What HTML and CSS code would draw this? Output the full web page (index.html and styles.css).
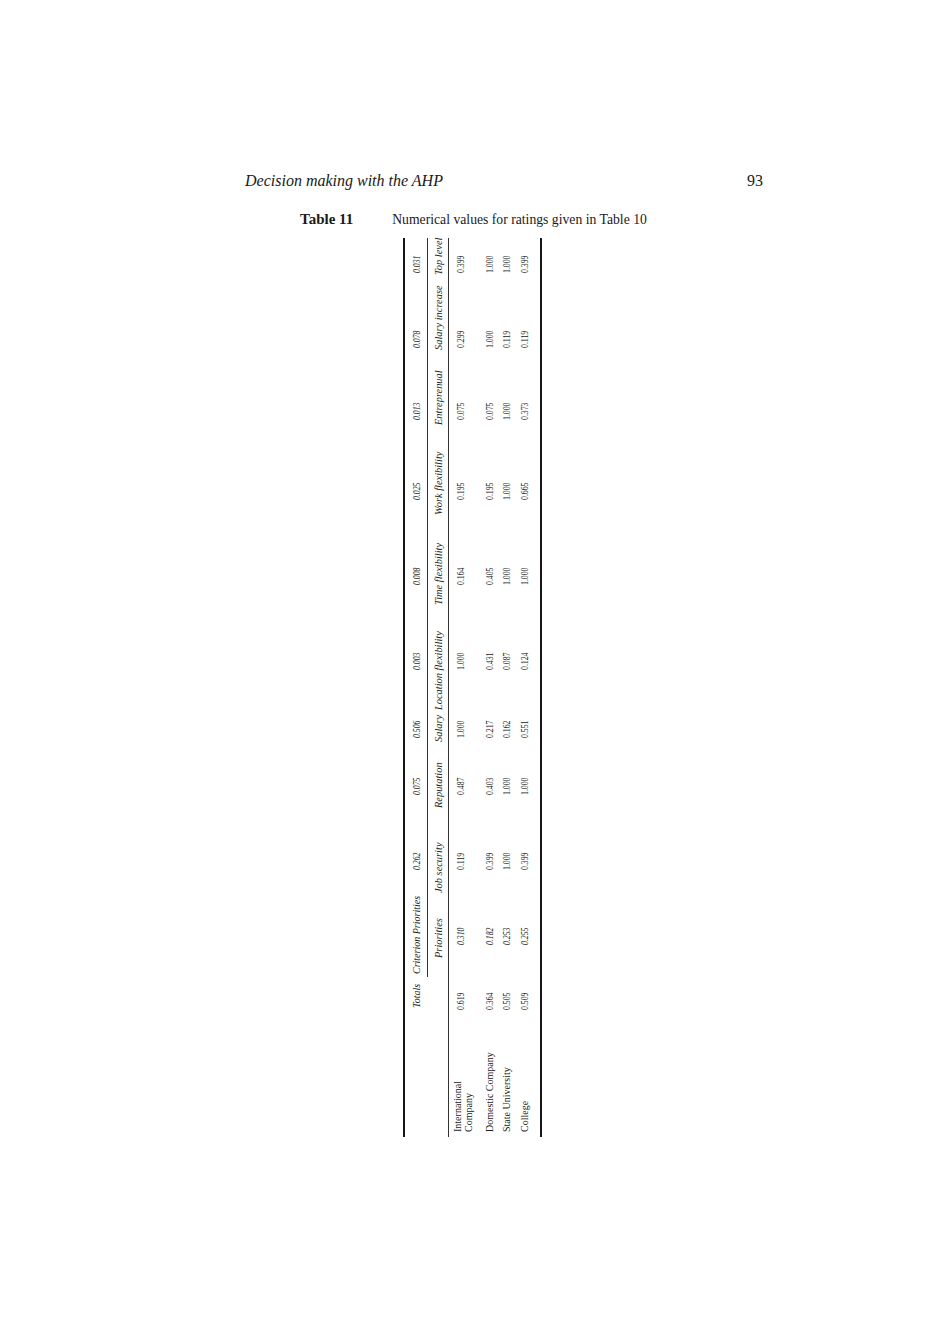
FILE: index.html
```html
<!DOCTYPE html>
<html>
<head>
<meta charset="utf-8">
<link rel="stylesheet" href="styles.css">
</head>
<body>
<div class="page">
  <header class="running-head">
    <span class="rh-title">Decision making with the AHP</span>
    <span class="rh-num">93</span>
  </header>
  <p class="caption"><b class="cap-label">Table 11</b>Numerical values for ratings given in Table 10</p>
  <div class="table-wrap">
    <table class="tbl">
      <colgroup>
        <col class="w0"><col class="w1"><col class="w2"><col class="w3"><col class="w4"><col class="w5">
        <col class="w6"><col class="w7"><col class="w8"><col class="w9"><col class="w10"><col class="w11">
      </colgroup>
      <tr class="h1">
        <td></td>
        <td class="tot">Totals</td>
        <td class="crit cm">Criterion Priorities</td>
        <td class="num cm"><span>0.262</span></td>
        <td class="num cm"><span>0.075</span></td>
        <td class="num cm"><span>0.506</span></td>
        <td class="num cm"><span>0.003</span></td>
        <td class="num cm"><span>0.008</span></td>
        <td class="num cm"><span>0.025</span></td>
        <td class="num cm"><span>0.013</span></td>
        <td class="num cm"><span>0.078</span></td>
        <td class="num cm"><span>0.031</span></td>
      </tr>
      <tr class="h2">
        <td></td>
        <td></td>
        <td class="lab">Priorities</td>
        <td class="lab">Job security</td>
        <td class="lab">Reputation</td>
        <td class="lab">Salary</td>
        <td class="lab">Location flexibility</td>
        <td class="lab">Time flexibility</td>
        <td class="lab">Work flexibility</td>
        <td class="lab">Entreprenual</td>
        <td class="lab">Salary increase</td>
        <td class="lab">Top level</td>
      </tr>
      <tr class="r1">
        <td class="name">International<br>Company</td>
        <td class="num"><span>0.619</span></td>
        <td class="num it"><span>0.310</span></td>
        <td class="num"><span>0.119</span></td>
        <td class="num"><span>0.487</span></td>
        <td class="num"><span>1.000</span></td>
        <td class="num"><span>1.000</span></td>
        <td class="num"><span>0.164</span></td>
        <td class="num"><span>0.195</span></td>
        <td class="num"><span>0.075</span></td>
        <td class="num"><span>0.299</span></td>
        <td class="num"><span>0.399</span></td>
      </tr>
      <tr class="r2">
        <td class="name">Domestic Company</td>
        <td class="num"><span>0.364</span></td>
        <td class="num it"><span>0.182</span></td>
        <td class="num"><span>0.399</span></td>
        <td class="num"><span>0.403</span></td>
        <td class="num"><span>0.217</span></td>
        <td class="num"><span>0.431</span></td>
        <td class="num"><span>0.405</span></td>
        <td class="num"><span>0.195</span></td>
        <td class="num"><span>0.075</span></td>
        <td class="num"><span>1.000</span></td>
        <td class="num"><span>1.000</span></td>
      </tr>
      <tr class="r3">
        <td class="name">State University</td>
        <td class="num"><span>0.505</span></td>
        <td class="num it"><span>0.253</span></td>
        <td class="num"><span>1.000</span></td>
        <td class="num"><span>1.000</span></td>
        <td class="num"><span>0.162</span></td>
        <td class="num"><span>0.087</span></td>
        <td class="num"><span>1.000</span></td>
        <td class="num"><span>1.000</span></td>
        <td class="num"><span>1.000</span></td>
        <td class="num"><span>0.119</span></td>
        <td class="num"><span>1.000</span></td>
      </tr>
      <tr class="r4">
        <td class="name">College</td>
        <td class="num"><span>0.509</span></td>
        <td class="num it"><span>0.255</span></td>
        <td class="num"><span>0.399</span></td>
        <td class="num"><span>1.000</span></td>
        <td class="num"><span>0.551</span></td>
        <td class="num"><span>0.124</span></td>
        <td class="num"><span>1.000</span></td>
        <td class="num"><span>0.665</span></td>
        <td class="num"><span>0.373</span></td>
        <td class="num"><span>0.119</span></td>
        <td class="num"><span>0.399</span></td>
      </tr>
    </table>
  </div>
</div>
</body>
</html>
```

FILE: styles.css
```css
html, body {
  margin: 0;
  padding: 0;
  background: #ffffff;
  overflow: hidden;
}

.page {
  width: 950px;
  height: 1344px;
  padding-top: 172px;
  box-sizing: border-box;
  font-family: "Liberation Serif", "Times New Roman", serif;
  color: #1a1a1a;
}

.running-head {
  display: flex;
  justify-content: space-between;
  align-items: baseline;
  margin-left: 245px;
  width: 518px;
  font-size: 16px;
  line-height: 18px;
}

.rh-title {
  font-style: italic;
}

.caption {
  margin: 21px 0 0 300px;
  font-size: 13.7px;
  line-height: 16px;
}

.cap-label {
  font-weight: bold;
  font-size: 15px;
  margin-right: 39px;
}

.table-wrap {
  margin: 10px 0 0 403px;
  width: 140px;
  height: 899px;
}

.tbl {
  width: 899px;
  table-layout: fixed;
  border-collapse: separate;
  border-spacing: 0;
  transform-origin: 0 0;
  transform: translateY(899px) rotate(-90deg);
  font-family: "Liberation Serif", "Times New Roman", serif;
  font-size: 10px;
  line-height: 11px;
  color: #222222;
}

.w0 { width: 120px; }
.w1 { width: 40px; }
.w2 { width: 78px; }
.w3 { width: 85px; }
.w4 { width: 66px; }
.w5 { width: 32px; }
.w6 { width: 105px; }
.w7 { width: 90px; }
.w8 { width: 90px; }
.w9 { width: 75px; }
.w10 { width: 75px; }
.w11 { width: 43px; }

.tbl td {
  padding: 0;
  text-align: left;
  white-space: nowrap;
  vertical-align: middle;
}

.tbl .h1 { height: 25px; }
.tbl .h1 td { border-top: 2px solid #161616; font-style: italic; }
.tbl .h1 td.cm { border-bottom: 1px solid #333333; }
.tbl .h2 { height: 21px; }
.tbl .h2 td { border-bottom: 1px solid #333333; font-style: italic; font-size: 10.4px; }

.tbl .r1 { height: 31px; }
.tbl .r2 { height: 17px; }
.tbl .r3 { height: 17px; }
.tbl .r4 { height: 28px; }
.tbl .r4 td { border-bottom: 2px solid #161616; }

.tbl .r1 td, .tbl .r2 td, .tbl .r3 td, .tbl .r4 td { vertical-align: top; }
.tbl .r1 td { padding-top: 3px; }
.tbl .r1 td.num { padding-top: 6px; }
.tbl .r2 td { padding-top: 4px; }
.tbl .r3 td { padding-top: 4px; }
.tbl .r4 td { padding-top: 5px; }

.tbl .name { padding-left: 5px; }
.tbl .it { font-style: italic; }

.tbl .num span {
  display: inline-block;
  font-size: 10.5px;
  transform: scaleX(0.74);
  transform-origin: 0 50%;
}

.tbl .tot { padding-left: 9px; }
.tbl .crit { padding-left: 3px; }

.tbl td.num:nth-child(2) { padding-left: 7px; }
.tbl td.num:nth-child(3) { padding-left: 32px; }
.tbl td.num:nth-child(4) { padding-left: 29px; }
.tbl td.num:nth-child(5) { padding-left: 19px; }
.tbl td.num:nth-child(6) { padding-left: 10px; }
.tbl td.num:nth-child(7) { padding-left: 46px; }
.tbl td.num:nth-child(8) { padding-left: 26px; }
.tbl td.num:nth-child(9) { padding-left: 21px; }
.tbl td.num:nth-child(10) { padding-left: 11px; }
.tbl td.num:nth-child(11) { padding-left: 8px; }
.tbl td.num:nth-child(12) { padding-left: 8px; }

.tbl td.lab { padding-left: 6px; }
.tbl td.lab:nth-child(3) { padding-left: 19px; }
```
